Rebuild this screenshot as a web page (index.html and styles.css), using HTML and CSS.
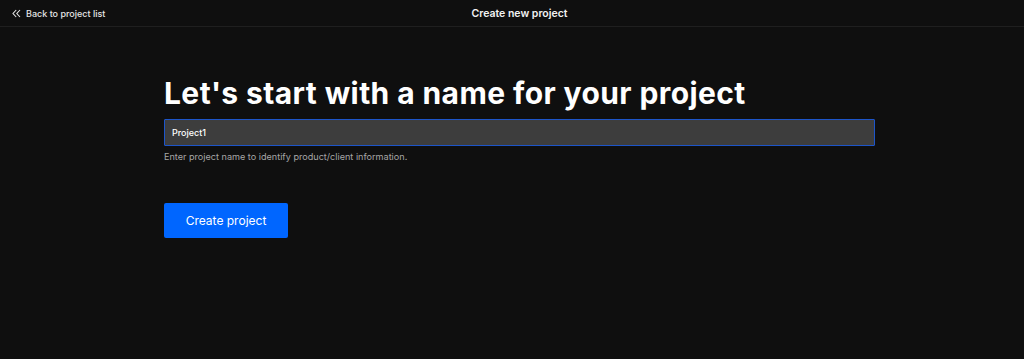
FILE: index.html
```html
<!DOCTYPE html>
<html lang="en">
<head>
  <meta charset="UTF-8">
  <meta name="viewport" content="width=device-width, initial-scale=1.0">
  <title>Create new project</title>
  <link rel="stylesheet" href="styles.css">
</head>
<body>
  <!-- Top bar -->
  <header class="topbar">
    <a class="back-link" href="#">
      <svg class="back-icon" width="9" height="9" viewBox="0 0 9 9" fill="none" stroke="currentColor" stroke-width="1.1">
        <path d="M4.2 1 L1 4.5 L4.2 8"/>
        <path d="M8 1 L4.8 4.5 L8 8"/>
      </svg>
      Back to project list
    </a>
    <div class="topbar-title">Create new project</div>
  </header>

  <main class="content">
    <h1>Let's start with a name for your project</h1>
    <input type="text" class="name-input" value="Project1">
    <p class="hint">Enter project name to identify product/client information.</p>
    <button class="create-btn">Create project</button>
  </main>
</body>
</html>
```

FILE: styles.css
```css
body {
  margin: 0;
  padding: 0;
  background-color: #0f0f0f;
  color: #ffffff;
  font-family: 'Inter', 'Liberation Sans', sans-serif;
}
.topbar {
  position: relative;
  height: 26px;
  border-bottom: 1px solid #1f1f1f;
  display: flex;
  align-items: center;
  justify-content: center;
}
.back-link {
  position: absolute;
  left: 12px;
  top: 0;
  height: 26px;
  display: flex;
  align-items: center;
  gap: 5px;
  color: #e6e6e6;
  text-decoration: none;
  font-size: 9px;
  font-weight: 500;
}
.back-icon {
  display: block;
}
.topbar-title {
  padding-left: 15px;
  font-size: 10.5px;
  font-weight: 600;
  color: #f2f2f2;
}
.content {
  width: 711px;
  margin: 0 auto 0 164px;
  padding-top: 41px;
}
h1 {
  margin: 0;
  font-size: 30px;
  font-weight: 700;
  line-height: 50px;
  letter-spacing: 0.4px;
}
.name-input {
  display: block;
  box-sizing: border-box;
  width: 711px;
  height: 27px;
  margin-top: 1px;
  padding: 0 7px;
  background-color: #3d3d3d;
  border: 1px solid #1d55c9;
  border-radius: 1px;
  color: #ffffff;
  font-family: 'Inter', 'Liberation Sans', sans-serif;
  font-size: 9px;
  font-weight: 500;
  outline: none;
}
.hint {
  margin: 5px 0 0 0;
  font-size: 9.1px;
  color: #a6a6a6;
}
.create-btn {
  margin-top: 41px;
  width: 124px;
  height: 35px;
  background-color: #0066ff;
  color: #ffffff;
  border: none;
  border-radius: 2px;
  font-family: 'Inter', 'Liberation Sans', sans-serif;
  font-size: 12px;
  cursor: pointer;
}
```
